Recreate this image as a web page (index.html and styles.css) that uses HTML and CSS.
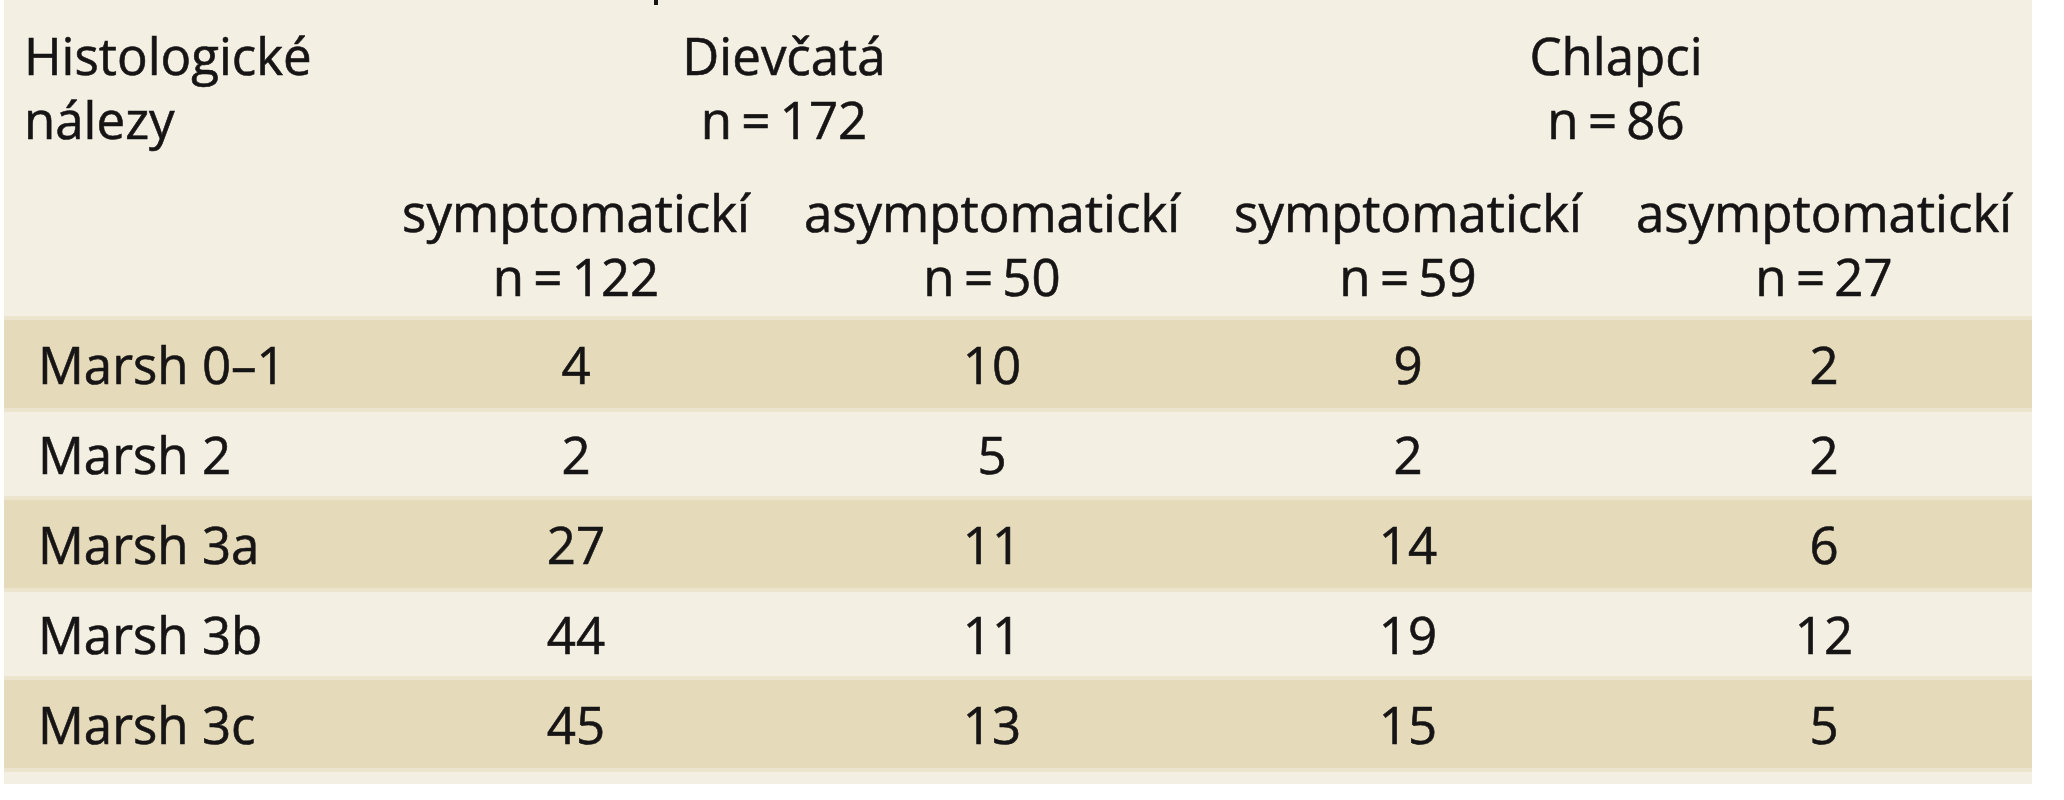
FILE: index.html
```html
<!DOCTYPE html>
<html lang="sk">
<head>
<meta charset="utf-8">
<title>Histologické nálezy</title>
<link rel="stylesheet" href="styles.css">
</head>
<body>
<div class="sheet">
  <span class="caption-cut" aria-hidden="true"></span>
  <table class="data">
    <colgroup>
      <col class="c-label">
      <col class="c-val"><col class="c-val"><col class="c-val"><col class="c-val">
    </colgroup>
    <thead>
      <tr class="h1">
        <th class="label" rowspan="2">Histologické<br>nálezy</th>
        <th colspan="2">Dievčatá<br><span class="n">n = 172</span></th>
        <th colspan="2">Chlapci<br><span class="n">n = 86</span></th>
      </tr>
      <tr class="h2">
        <th>symptomatickí<br><span class="n">n = 122</span></th>
        <th>asymptomatickí<br><span class="n">n = 50</span></th>
        <th>symptomatickí<br><span class="n">n = 59</span></th>
        <th>asymptomatickí<br><span class="n">n = 27</span></th>
      </tr>
    </thead>
    <tbody>
      <tr class="dark"><td class="label">Marsh 0–1</td><td>4</td><td>10</td><td>9</td><td>2</td></tr>
      <tr class="light"><td class="label">Marsh 2</td><td>2</td><td>5</td><td>2</td><td>2</td></tr>
      <tr class="dark"><td class="label">Marsh 3a</td><td>27</td><td>11</td><td>14</td><td>6</td></tr>
      <tr class="light"><td class="label">Marsh 3b</td><td>44</td><td>11</td><td>19</td><td>12</td></tr>
      <tr class="dark"><td class="label">Marsh 3c</td><td>45</td><td>13</td><td>15</td><td>5</td></tr>
    </tbody>
  </table>
</div>
</body>
</html>
```

FILE: styles.css
```css
html, body {
  margin: 0;
  padding: 0;
  background: #ffffff;
}

body {
  font-family: "Open Sans", "Noto Sans", "DejaVu Sans", sans-serif;
  font-size: 51px;
  color: #161414;
  -webkit-text-stroke: 0.6px #161414;
}

.sheet {
  position: relative;
  margin-left: 4px;
  width: 2028px;
  background: #f3efe3;
  padding-bottom: 12px;
}

.caption-cut {
  position: absolute;
  left: 650px;
  top: 0;
  width: 4px;
  height: 5px;
  background: #161414;
}

.data {
  width: 2028px;
  table-layout: fixed;
  border-collapse: separate;
  border-spacing: 0;
}

.c-label { width: 364px; }
.c-val { width: 416px; }

.data th,
.data td {
  font-weight: normal;
  line-height: 64px;
  text-align: center;
  white-space: nowrap;
  padding: 0;
}

.data th.label {
  text-align: left;
  vertical-align: top;
  padding-left: 20px;
  padding-top: 23px;
}

.h1 th {
  padding-top: 23px;
  vertical-align: top;
}

.h2 th {
  padding-top: 29px;
  padding-bottom: 8px;
  vertical-align: top;
}

.n {
  word-spacing: -4px;
}

.data td.label {
  text-align: left;
  padding-left: 34px;
}

.dark td {
  background: #e5dbbb;
  border-top: 4px solid #ece4cd;
  border-bottom: 4px solid #ece4cd;
  padding-top: 12px;
  padding-bottom: 12px;
}

.light td {
  background: #f3efe3;
  padding-top: 10px;
  padding-bottom: 10px;
}
```
